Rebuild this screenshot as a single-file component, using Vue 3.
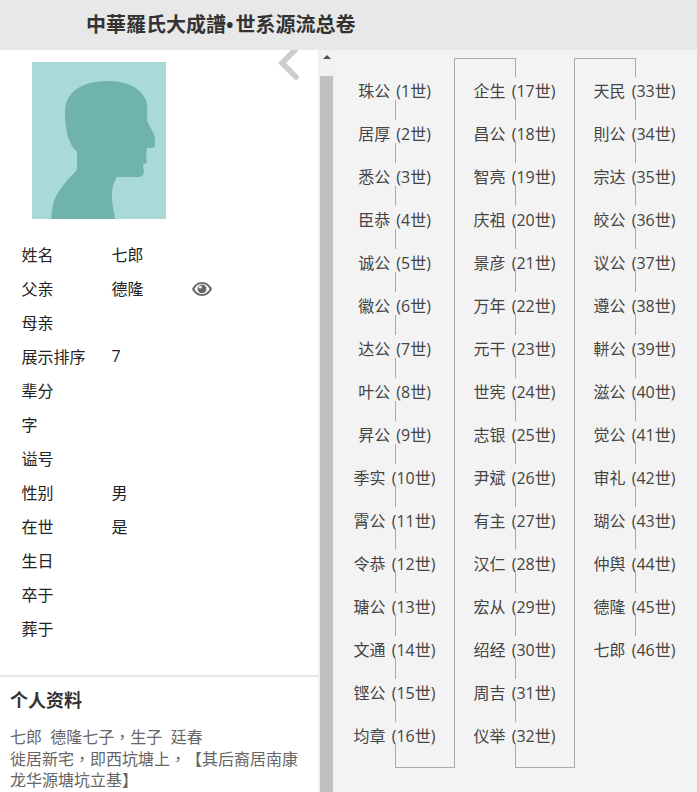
<script setup>
const fields = [
  ['姓名', '七郎'], ['父亲', '德隆', true], ['母亲', ''], ['展示排序', '7'], ['辈分', ''], ['字', ''],
  ['谥号', ''], ['性别', '男'], ['在世', '是'], ['生日', ''], ['卒于', ''], ['葬于', ''],
]
const names = '珠公 居厚 悉公 臣恭 诚公 徽公 达公 叶公 昇公 季实 霄公 令恭 瑭公 文通 铿公 均章 企生 昌公 智亮 庆祖 景彦 万年 元干 世宪 志银 尹斌 有主 汉仁 宏从 绍经 周吉 仪举 天民 則公 宗达 皎公 议公 遵公 軿公 滋公 觉公 审礼 瑚公 仲舆 德隆 七郎'.split(' ')
const items = names.map((n, i) => `${n} (${i + 1}世)`)
const columns = [items.slice(0, 16), items.slice(16, 32), items.slice(32)]
</script>

<template>
  <div class="page">
    <header class="top">中華羅氏大成譜<span class="dot">•</span>世系源流总卷</header>
    <div class="main">
      <aside class="side">
        <svg class="chevron" width="24" height="32" viewBox="0 0 24 32"><path d="M20 -1 L6 13 L20 27" fill="none" stroke="#cccccc" stroke-width="5.500" stroke-linecap="round" stroke-linejoin="miter"/></svg>
        <svg class="portrait" width="134" height="157" viewBox="0 0 134 157">
          <defs><filter id="soft"><feGaussianBlur stdDeviation="0.600"/></filter></defs>
          <rect width="134" height="157" fill="#aadad8"/>
          <path fill="#6fb3ae" filter="url(#soft)" d="M19 160 C20 142 22 136 28 128 C34 119 40 113 45 108 L45 90 C37 83 33 70 33 50 C33 30 50 19 75 19 C92 19 108 24 114 38 C116 46 115 52 115 58 C117 64 122 70 123 76 L123 84 C122 86 118 86 115 86 L114 93 L115 100 L111 103 L112 111 C110 115 108 115 106 115 L85 115 C81 122 80 127 80 132 C80 145 82 150 84 160 Z"/>
        </svg>
        <dl class="fields">
          <div v-for="f in fields" :key="f[0]" class="field">
            <dt>{{ f[0] }}</dt>
            <dd>{{ f[1] }}</dd>
            <svg v-if="f[2]" class="eye" width="20" height="14" viewBox="0 0 20 14">
              <path fill="#666" d="M10 0C5.600 0 2 2.800 0 7c2 4.200 5.600 7 10 7s8-2.800 10-7c-2-4.200-5.600-7-10-7Z"/>
              <path fill="#fff" d="M10 1.800C6.800 1.800 4 3.800 2.400 7 4 10.200 6.800 12.200 10 12.200S16 10.200 17.600 7C16 3.800 13.200 1.800 10 1.800Z"/>
              <circle cx="10" cy="6.800" r="4.400" fill="#666"/>
              <circle cx="8.300" cy="5.200" r="1.400" fill="#fff"/>
            </svg>
          </div>
        </dl>
        <section class="bio">
          <h2>个人资料</h2>
          <p>七郎&nbsp;&nbsp;德隆七子<span class="comma">，</span>生子&nbsp;&nbsp;廷春<br>徙居新宅<span class="comma">，</span>即西坑塘上<span class="comma">，</span>【其后裔居南康<br>龙华源塘坑立基】</p>
        </section>
      </aside>
      <div class="scrollbar">
        <span class="arrow"></span>
        <span class="thumb"></span>
      </div>
      <div class="tree">
        <div v-for="(col, c) in columns" :key="c" class="col" :class="'col' + c">
          <div v-for="item in col" :key="item" class="row"><span>{{ item }}</span></div>
        </div>
      </div>
    </div>
  </div>
</template>

<style>
html, body { margin: 0; overflow: hidden; }
</style>

<style scoped>
.page {
  width: 697px;
  height: 792px;
  overflow: hidden;
  display: flex;
  flex-direction: column;
  font-family: "Open Sans", "Noto Sans CJK SC", sans-serif;
  font-size: 16px;
  text-spacing-trim: space-all;
}
.top {
  height: 50px;
  flex: none;
  box-sizing: border-box;
  padding-left: 86px;
  background: #e8e8e8;
  color: #333;
  font-size: 20px;
  font-weight: 700;
  line-height: 50px;
}
.dot { margin-right: 2px; }
.main { flex: 1; display: flex; min-height: 0; }
.side {
  width: 318px;
  flex: none;
  position: relative;
  background: #fff;
  overflow: hidden;
}
.chevron { position: absolute; left: 276px; top: 0; }
.portrait { display: block; margin: 12px 0 0 32px; }
.fields { margin: 18px 0 0; padding-left: 21.500px; }
.field {
  display: flex;
  align-items: center;
  height: 34px;
  color: #222;
}
.field dt { width: 90px; }
.field dd { margin: 0; width: 80.500px; }
.eye { margin-top: 1px; }
.bio {
  margin-top: 30px;
  border-top: 2px solid #e8e8e8;
  padding: 11px 10px 0;
}
.bio h2 {
  margin: 0;
  color: #333;
  font-size: 18px;
  font-weight: 700;
  line-height: 24px;
}
.bio p {
  margin: 14px 0 0;
  color: #666;
  font-size: 16px;
  line-height: 21px;
}
.comma { font-family: "Noto Sans CJK TC", sans-serif; }
.scrollbar {
  width: 17px;
  flex: none;
  background: #f1f1f1;
  box-sizing: border-box;
  padding: 5px 2px 0;
  display: flex;
  flex-direction: column;
  align-items: center;
}
.arrow {
  width: 0;
  height: 0;
  border: 4px solid transparent;
  border-top: 0;
  border-bottom: 4px solid #505050;
}
.thumb {
  width: 13px;
  flex: 1;
  margin-top: 17px;
  background: #c1c1c1;
}
.tree {
  flex: 1;
  display: flex;
  align-items: flex-start;
  background: #f3f3f3;
  padding-top: 8px;
}
.col {
  position: relative;
  width: 120px;
  height: 710px;
  box-sizing: border-box;
  padding-top: 11px;
  color: #444;
  flex: none;
}
.col0 { width: 119px; }
.col::before {
  content: "";
  position: absolute;
  left: 60px;
  top: 0;
  bottom: 0;
  border-left: 1px solid #aaa;
}
.col0::before { top: 40px; }
.col2::before { bottom: 131px; }
.col0::after {
  content: "";
  position: absolute;
  left: 60px;
  right: 0;
  bottom: 0;
  border-bottom: 1px solid #aaa;
}
.col1 {
  background: linear-gradient(#aaa, #aaa) left 60px bottom / 60px 1px no-repeat;
}
.col1, .col2 {
  border-left: 1px solid #aaa;
}
.col1::after, .col2::after {
  content: "";
  position: absolute;
  left: 0;
  width: 60px;
  top: 0;
  border-top: 1px solid #aaa;
}
.row {
  position: relative;
  height: 43px;
  box-sizing: border-box;
  padding-bottom: 5px;
  display: flex;
  align-items: center;
  justify-content: center;
}
.row span {
  background: #f3f3f3;
  height: 23px;
  line-height: 28px;
  white-space: nowrap;
  word-spacing: 2px;
}
</style>
